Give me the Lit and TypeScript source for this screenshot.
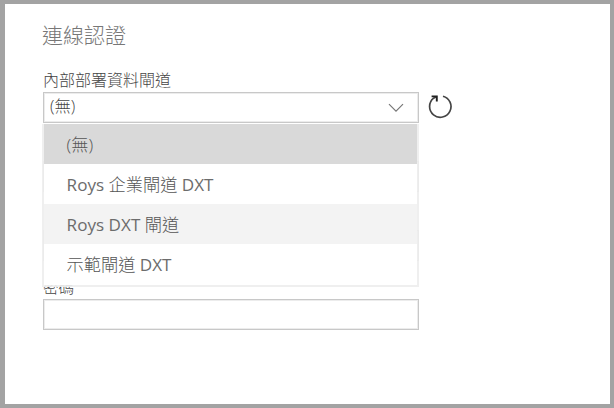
import { LitElement, html, css } from "lit";
import { customElement, state } from "lit/decorators.js";
import { classMap } from "lit/directives/class-map.js";

@customElement("app-root")
class AppRoot extends LitElement {
  static styles = css`
    :host {
      display: block;
      box-sizing: border-box;
      height: 408px;
      border: 4px solid #a3a3a3;
      border-left-width: 5px;
      background: #fff;
      padding: 17px 0 0 38px;
      overflow: hidden;
      color: #555;
      font-family: "Open Sans", "Noto Sans CJK TC", sans-serif;
      font-size: 16px;
    }
    h1 {
      margin: 0 0 0 -1px;
      font-size: 21px;
      line-height: 28px;
      font-weight: 300;
      color: #777;
    }
    .label {
      margin-top: 20px;
      height: 23px;
      line-height: 22px;
      font-weight: 300;
      color: #444;
      white-space: nowrap;
    }
    .row {
      display: flex;
      align-items: flex-start;
    }
    .anchor {
      position: relative;
      width: 376px;
    }
    .select,
    .input {
      box-sizing: border-box;
      width: 376px;
      height: 31px;
      border: 1px solid #c8c8c8;
      box-shadow: inset 0 0 0 1px #ececec;
      background: #fff;
    }
    .select {
      display: flex;
      align-items: center;
      justify-content: space-between;
      padding: 0 14px 5px 6px;
      font-weight: 300;
      font-size: 16.4px;
      color: #444;
    }
    .chevron {
      width: 16px;
      height: 10px;
      margin-top: 6px;
    }
    .refresh {
      width: 26px;
      height: 26px;
      margin: 1px 0 0 8px;
    }
    .field .label {
      margin-top: 15px;
      font-size: 15.5px;
    }
    .menu {
      position: absolute;
      z-index: 1;
      top: 32px;
      left: -1px;
      width: 373px;
      box-sizing: content-box;
      border: 2px solid rgba(238, 238, 238, 0.92);
      border-top-width: 0;
      padding-bottom: 0.6px;
      background-color: #fff;
      background-clip: padding-box;
      font-size: 17.2px;
      font-weight: 300;
      color: #555;
    }
    .option {
      height: 40.1px;
      line-height: 41px;
      padding-left: 22.6px;
      white-space: nowrap;
    }
    .latin {
      font-size: 17.1px;
      font-weight: 400;
      color: #6c6c6c;
    }
    .selected {
      background: #d9d9d9;
    }
    .hover {
      background: #f3f3f3;
    }
  `;

  @state() options = ["(無)", "Roys 企業閘道 DXT", "Roys DXT 閘道", "示範閘道 DXT"];
  @state() selected = 0;
  @state() hovered = 2;

  private label(text: string) {
    return text
      .split(/([A-Za-z]+)/)
      .map((part) => (/^[A-Za-z]/.test(part) ? html`<span class="latin">${part}</span>` : part));
  }

  render() {
    return html`
      <h1>連線認證</h1>
      <div class="label">內部部署資料閘道</div>
      <div class="row">
        <div class="anchor">
          <div class="select">
            <span>${this.options[this.selected]}</span>
            <svg class="chevron" viewBox="0 0 16 10" fill="none" stroke="#777" stroke-width="1.2">
              <path d="M1 1.2 8 8.2 15 1.2" />
            </svg>
          </div>
          <div class="menu">
            ${this.options.map(
              (text, i) => html`<div
                class=${classMap({ option: true, selected: i === this.selected, hover: i === this.hovered })}
                @mouseenter=${() => (this.hovered = i)}
              >${this.label(text)}</div>`
            )}
          </div>
        </div>
        <svg class="refresh" viewBox="0 0 26 26" fill="none" stroke="#444" stroke-width="1.7">
          <path d="M16 3.2A10.7 10.7 0 1 1 6.6 5.2L9.6 3.6" />
          <path d="M4.6 3.4H9.8V8.4" stroke="#222" stroke-width="1.9" />
        </svg>
      </div>
      ${["", "", "密碼"].map(
        (name) => html`<div class="field">
          <div class="label">${name}</div>
          <div class="input"></div>
        </div>`
      )}
    `;
  }
}
